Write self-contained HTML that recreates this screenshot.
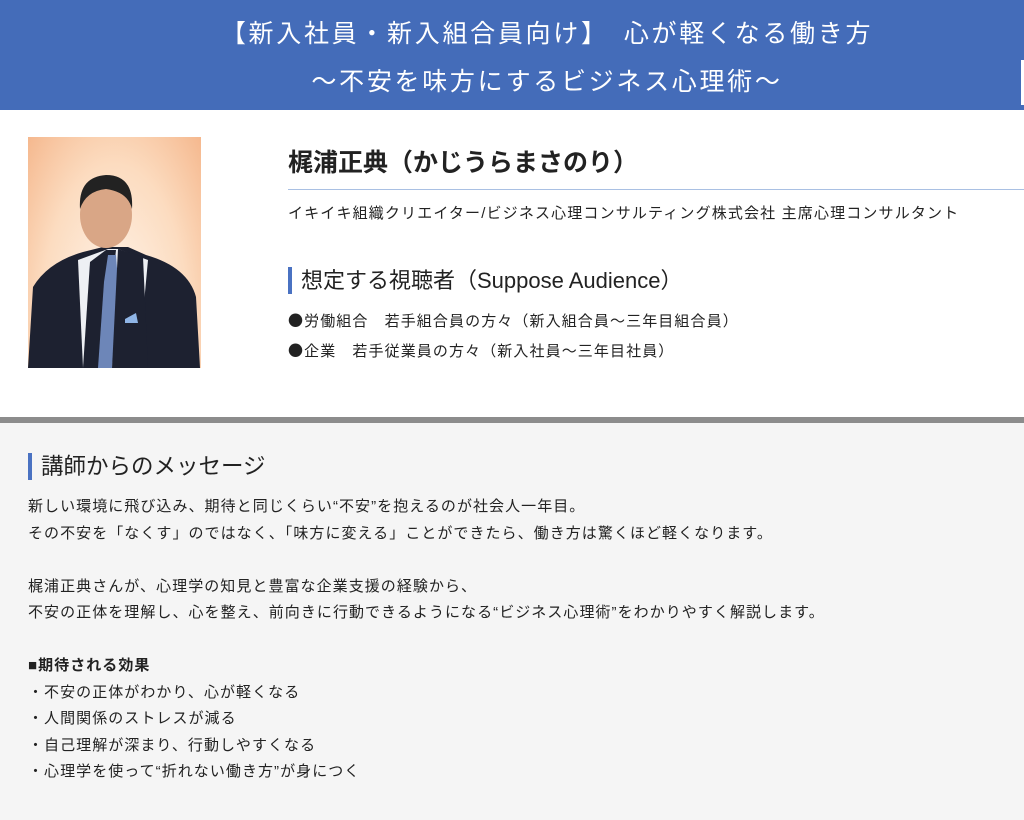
<!DOCTYPE html>
<html><head><meta charset="utf-8"><style>
body{margin:0;width:1024px;height:820px;overflow:hidden;background:#f5f5f5;font-family:"Liberation Sans","Noto Sans CJK JP",sans-serif;color:#222}
.hdr{position:absolute;left:0;top:0;width:1024px;height:110px;background:#446cb9;color:#fff;text-align:center;font-size:25px;letter-spacing:2.7px}
.hdr div{position:absolute;left:70px;width:954px}
.top{position:absolute;left:0;top:110px;width:1024px;height:307px;background:#fff}
.photo{position:absolute;left:28px;top:137px;width:173px;height:231px;background:radial-gradient(ellipse at 50% 80%,#fff6ee 0%,#fcdcc0 60%,#f5b88e 100%);overflow:hidden}
.bar{position:absolute;left:0;top:417px;width:1024px;height:6px;background:#8c8c8c}
.t{position:absolute;white-space:nowrap}
.bl{border-left:4px solid #4a72c2;padding-left:9px}
.j{font-family:"Noto Sans CJK JP",sans-serif}
</style></head><body>
<div class="hdr"><div style="top:14px">【新入社員・新入組合員向け】　心が軽くなる働き方</div><div style="top:62px">〜不安を味方にするビジネス心理術〜</div></div>
<div style="position:absolute;left:1021px;top:60px;width:3px;height:45px;background:#fff"></div>
<div class="top"></div>
<div class="photo">
<svg width="173" height="231" viewBox="0 0 173 231">
<path d="M0 231 L5 150 Q20 125 55 115 L75 110 L100 110 L118 118 Q160 130 168 160 L172 231Z" fill="#1d2130"/>
<path d="M50 123 L80 112 L90 112 L120 123 L110 231 L55 231Z" fill="#eef0f4"/>
<path d="M62 125 L78 113 L88 113 L75 231 L55 231Z" fill="#1d2130"/>
<path d="M80 118 L88 118 L90 145 L84 231 L70 231 L76 145Z" fill="#6d86b8"/>
<path d="M90 112 L115 120 L120 231 L84 231Z" fill="#1d2130"/>
<path d="M97 182 L108 176 L110 186 L97 186Z" fill="#8fb5e6"/>
<ellipse cx="78" cy="78" rx="26" ry="33" fill="#d9a686"/>
<path d="M52 72 Q50 40 78 38 Q106 38 104 72 Q100 55 78 52 Q58 54 52 72Z" fill="#222"/>
</svg></div>
<div class="t" style="left:288px;top:143px;font-size:25px;font-weight:bold;color:#222">梶浦正典（かじうらまさのり）</div>
<div style="position:absolute;left:288px;top:189px;width:736px;height:1px;background:#a9c0e3"></div>
<div class="t" style="left:288px;top:202px;font-size:15px;letter-spacing:1.15px">イキイキ組織クリエイター/ビジネス心理コンサルティング株式会社 主席心理コンサルタント</div>
<div class="t bl" style="left:288px;top:267px;font-size:22px;line-height:27px">想定する視聴者（Suppose Audience）</div>
<div class="t" style="left:288px;top:310px;font-size:15px;letter-spacing:1.1px"><span class="j">●</span>労働組合　若手組合員の方々（新入組合員〜三年目組合員）</div>
<div class="t" style="left:288px;top:340px;font-size:15px;letter-spacing:1.1px"><span class="j">●</span>企業　若手従業員の方々（新入社員〜三年目社員）</div>
<div class="bar"></div>
<div class="t bl" style="left:28px;top:453px;font-size:22.5px;line-height:27px">講師からのメッセージ</div>
<div class="t" style="left:28px;top:494px;font-size:15px;line-height:26.5px;letter-spacing:1.05px">新しい環境に飛び込み、期待と同じくらい“不安”を抱えるのが社会人一年目。<br>その不安を「なくす」のではなく、「味方に変える」ことができたら、働き方は驚くほど軽くなります。<br><br>梶浦正典さんが、心理学の知見と豊富な企業支援の経験から、<br>不安の正体を理解し、心を整え、前向きに行動できるようになる“ビジネス心理術”をわかりやすく解説します。<br><br><b>■期待される効果</b><br>・不安の正体がわかり、心が軽くなる<br>・人間関係のストレスが減る<br>・自己理解が深まり、行動しやすくなる<br>・心理学を使って“折れない働き方”が身につく</div>
</body></html>
